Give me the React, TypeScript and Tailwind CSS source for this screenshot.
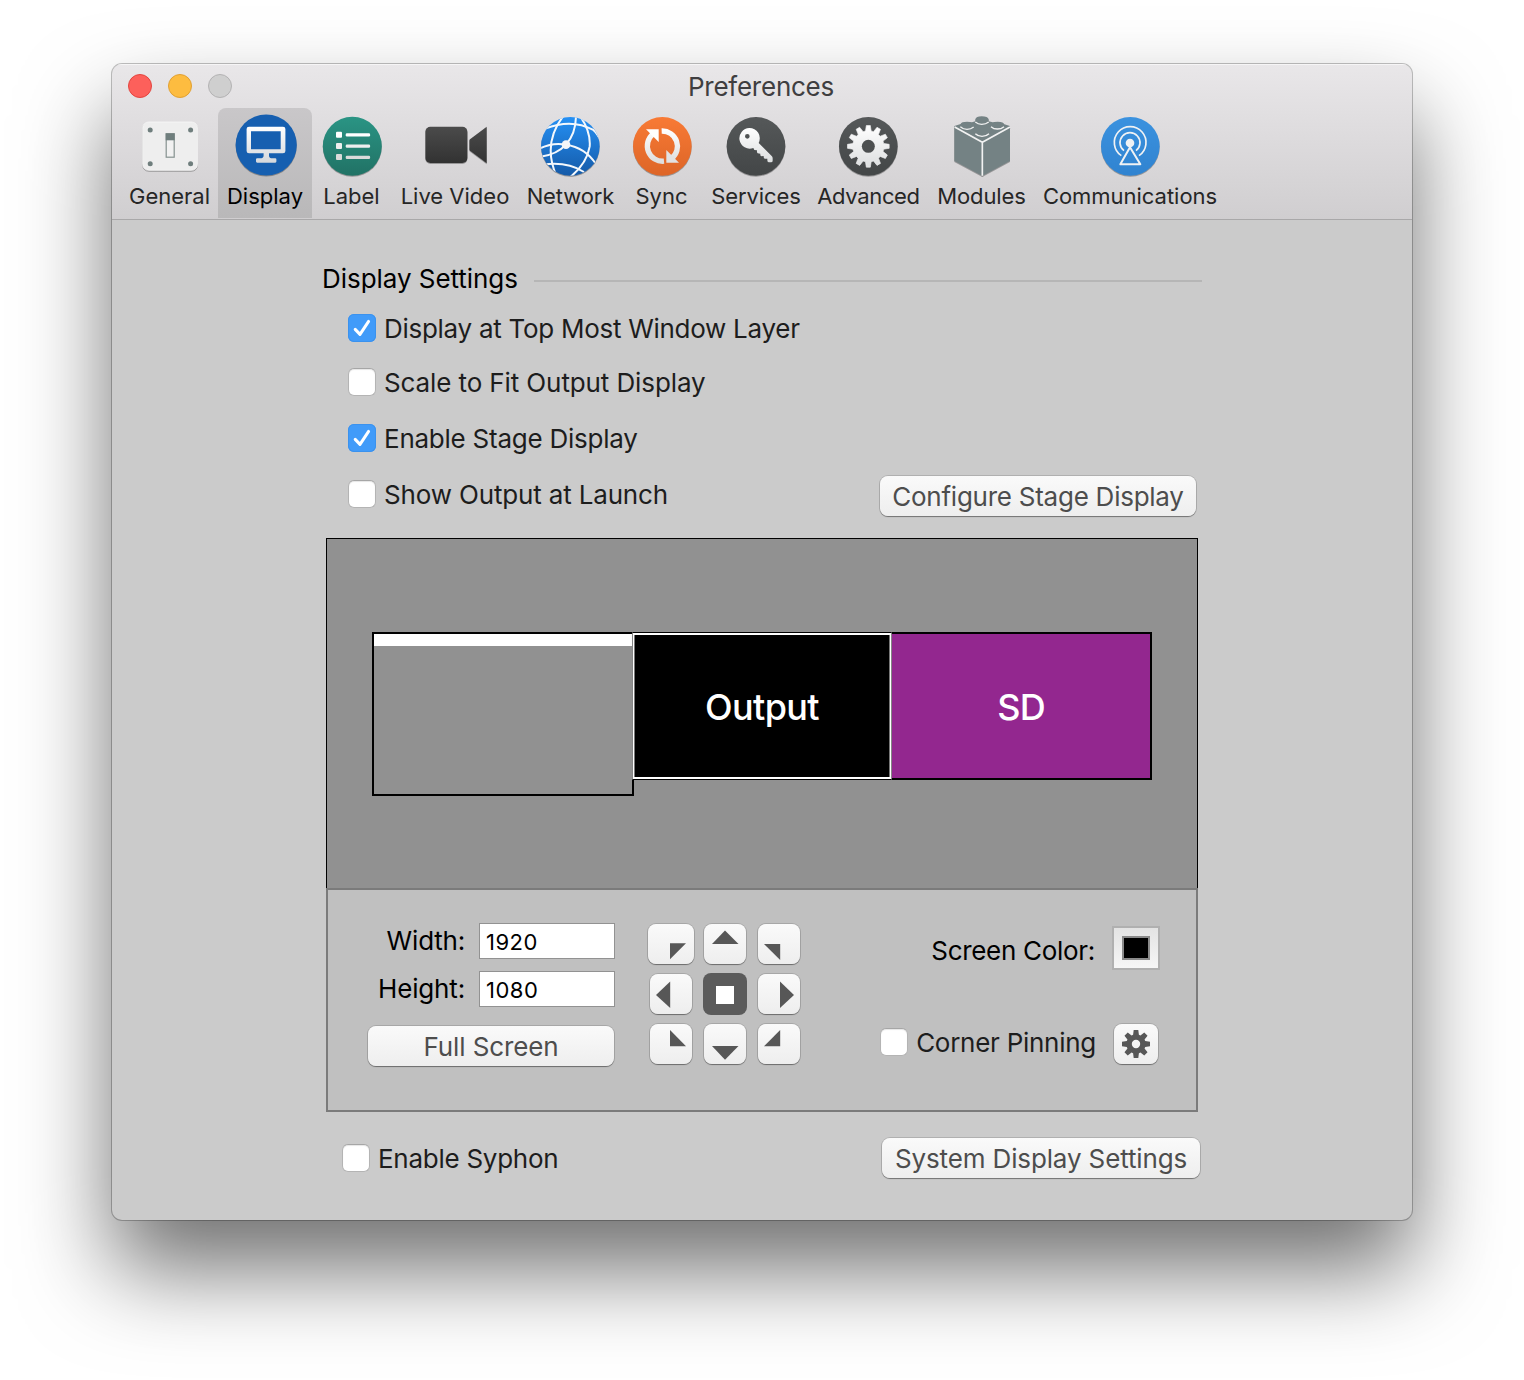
import React from 'react';

function gearPath(cx: number, cy: number, teeth: number, body: number, outer: number, baseHalf: number, tipHalf: number) {
  const pts: string[] = [];
  for (let i = 0; i < teeth; i++) {
    const a = (i / teeth) * Math.PI * 2 - Math.PI / 2;
    const c = Math.cos(a);
    const s = Math.sin(a);
    const at = (r: number, t: number) => `${(cx + r * c - t * s).toFixed(2)} ${(cy + r * s + t * c).toFixed(2)}`;
    pts.push(at(body, -baseHalf), at(outer, -tipHalf), at(outer, tipHalf), at(body, baseHalf));
  }
  return `M${pts.join('L')}Z`;
}

function Grad({ id, from, to }: { id: string; from: string; to: string }) {
  return (
    <linearGradient id={id} x1="0" y1="0" x2="0" y2="1">
      <stop offset="0" stopColor={from} />
      <stop offset="1" stopColor={to} />
    </linearGradient>
  );
}

function Icon({ children }: { children: React.ReactNode }) {
  return (
    <svg width="64" height="64" viewBox="0 0 64 64" className="shrink-0 overflow-visible drop-shadow-[0_1px_0.5px_rgba(0,0,0,0.3)]">
      {children}
    </svg>
  );
}

const GeneralIcon = () => (
  <Icon>
    <rect x="5.7" y="8" width="54.8" height="48.3" rx="6" fill="#eeeeee" stroke="#f8f8f8" strokeWidth="0.8" />
    {[13.2, 53.6].map((x) => [16, 49.7].map((y) => <circle key={`${x}-${y}`} cx={x} cy={y} r="2.5" fill="#6f7e7d" />))}
    <rect x="29.2" y="19.8" width="8" height="23.4" fill="#f1f1f1" stroke="#85918f" strokeWidth="1.2" />
    <rect x="28.7" y="19.3" width="9" height="7" fill="#6f7e7d" />
  </Icon>
);

const DisplayIcon = () => (
  <Icon>
    <defs><Grad id="scr" from="#ffffff" to="#d5d8dc" /></defs>
    <circle cx="33.2" cy="31" r="30.6" fill="#165fb0" />
    <path
      fillRule="evenodd"
      fill="url(#scr)"
      d="M16 12.7h34a2.4 2.4 0 0 1 2.4 2.4v21.8a2.4 2.4 0 0 1-2.4 2.4H36v2.6q.2 2.4 3.4 2.4h2.8q1.2.1 1.2 1.2v2.1q0 1-1.2 1.1H24.2q-1.2 0-1.2-1.1v-2.1q0-1.1 1.2-1.2h2.8q3.4 0 3.6-2.4v-2.6H16a2.4 2.4 0 0 1-2.4-2.4V15.1A2.4 2.4 0 0 1 16 12.7zM18 17.2v18h29.7v-18z"
    />
  </Icon>
);

const LabelIcon = () => (
  <Icon>
    <defs><Grad id="lab" from="#2a9484" to="#217265" /></defs>
    <circle cx="32.3" cy="32.3" r="29.5" fill="url(#lab)" />
    {[
      { fill: '#ffffff', y: 17.7 },
      { fill: '#eeeeee', y: 29 },
      { fill: '#dadada', y: 40.1 },
    ].map(({ fill, y }) => (
      <g key={y} fill={fill}>
        <rect x="16" y={y} width="6" height="6" rx="1" />
        <rect x="25.7" y={y + 1.6} width="24.4" height="3.2" rx="1.2" />
      </g>
    ))}
  </Icon>
);

const VideoIcon = () => (
  <Icon>
    <defs><Grad id="vid" from="#4b4b4b" to="#323232" /></defs>
    <rect x="2.4" y="12.7" width="42" height="36.3" rx="5" fill="url(#vid)" />
    <path d="M46.4 26.5q0-.7.6-1.2L63.7 12.7v36.6L47 36.7q-.6-.5-.6-1.2z" fill="url(#vid)" />
  </Icon>
);

const NetworkIcon = () => (
  <Icon>
    <defs>
      <Grad id="net" from="#2590f4" to="#155aa8" />
      <clipPath id="netclip"><circle cx="541" cy="139" r="88" /></clipPath>
    </defs>
    <g transform="translate(-148 -14) scale(0.33333)">
      <circle cx="541" cy="139" r="88" fill="url(#net)" />
      <g clipPath="url(#netclip)" fill="none" stroke="#f4f8fc" strokeWidth="6">
        <path d="M520 48Q456 130 500 230" />
        <path d="M528 134Q558 100 558 46" />
        <path d="M570 48Q603 95 599 140Q590 192 540 232" />
        <path d="M466 86Q545 54 610 90Q622 100 634 126" />
        <path d="M448 146Q488 126 528 134Q585 142 618 192" />
        <path d="M528 134Q500 164 452 170" />
        <path d="M460 194Q530 184 582 216" />
      </g>
      <circle cx="528" cy="134" r="13" fill="#f4f6f8" />
    </g>
  </Icon>
);

const SyncIcon = () => (
  <Icon>
    <defs>
      <Grad id="syn" from="#f87a35" to="#dd6527" />
      <linearGradient id="arr" gradientUnits="userSpaceOnUse" x1="0" y1="86" x2="0" y2="190">
        <stop offset="0" stopColor="#ffffff" />
        <stop offset="1" stopColor="#dddddd" />
      </linearGradient>
    </defs>
    <g transform="translate(-240 -14) scale(0.33333)">
      <circle cx="817" cy="139" r="88" fill="url(#syn)" />
      <g fill="none" stroke="url(#arr)" strokeWidth="16">
        <path d="M822 183.5A46 46 0 0 1 789 102" />
        <path d="M815 93A46 46 0 0 1 845 175" />
      </g>
      <path d="M768 88H806V126Z" fill="#ffffff" />
      <path d="M867 188H829V150Z" fill="#e2e2e2" />
    </g>
  </Icon>
);

const ServicesIcon = () => (
  <Icon>
    <defs>
      <Grad id="dark" from="#555859" to="#434647" />
      <Grad id="pale" from="#ffffff" to="#dcdedf" />
    </defs>
    <g transform="translate(-24 -14) scale(0.33333)">
      <circle cx="168" cy="139" r="88" fill="url(#dark)" />
      <path
        fillRule="evenodd"
        fill="url(#pale)"
        d="M148 84A31 31 0 0 1 176 129L215 168Q218 171 218 175V182Q218 187 213 187H206Q202 187 202 181V176H195Q191 176 191 171V168L184 169Q180 168 181 161L173 160Q170 156 171 151L163 150L160 144A31 31 0 1 1 148 84ZM142 102A7 7 0 1 0 142 116A7 7 0 1 0 142 102Z"
      />
    </g>
  </Icon>
);

const AdvancedIcon = () => (
  <Icon>
    <g transform="translate(-136 -14) scale(0.33333)">
      <circle cx="505" cy="139" r="88" fill="url(#dark)" />
      <path d={gearPath(505, 139, 12, 46, 62.5, 8.5, 6)} fill="url(#pale)" stroke="#eeeff0" strokeWidth="2" strokeLinejoin="round" />
      <circle cx="505" cy="139" r="19.5" fill="#4c4f50" />
    </g>
  </Icon>
);

const ModulesIcon = () => (
  <Icon>
    <g transform="translate(-19 -58) scale(0.33333)">
      <path
        fill="#748284"
        d="M73 210L92 204Q94 197 111 197Q122 197 126 199L136 196V190Q138 181 155 181Q174 181 176 190V196L188 199Q192 197 203 197Q222 198 223 205L240 210V315L157 360L73 315Z"
      />
      <g fill="none" stroke="#f2f2f2" strokeWidth="5">
        <path d="M74 213L157 259L240 213M157 259V359" />
        <path d="M91 212Q100 220 111 220Q123 220 131 213" strokeWidth="4" />
        <path d="M136 198Q144 205 155 205Q168 205 176 198" strokeWidth="4" />
        <path d="M183 212Q191 219 202 219Q214 219 222 212" strokeWidth="4" />
        <path d="M136 233Q144 241 156 241Q169 241 177 233" strokeWidth="4" />
      </g>
    </g>
  </Icon>
);

const CommunicationsIcon = () => (
  <Icon>
    <defs><Grad id="com" from="#3b92df" to="#3083d0" /></defs>
    <g transform="translate(-168 -58) scale(0.33333)">
      <circle cx="601" cy="271" r="88" fill="url(#com)" />
      <g fill="none" stroke="#f0f2f4" strokeWidth="5">
        <path d="M574 299A47.5 47.5 0 1 1 627 299" />
        <path d="M582 284A30 30 0 1 1 618 284" />
        <path d="M600 274L571 325H631Z" strokeLinejoin="round" strokeWidth="6" />
      </g>
      <circle cx="600" cy="261" r="13" fill="#f0f2f4" />
    </g>
  </Icon>
);

const tabs = [
  { label: 'General', width: 'w-[98px]', icon: <GeneralIcon />, text: 'ml-px' },
  { label: 'Display', width: 'w-[94px]', icon: <DisplayIcon />, text: '', selected: true },
  { label: 'Label', width: 'w-20', icon: <LabelIcon />, text: 'mr-px' },
  { label: 'Live Video', width: 'w-[126px]', icon: <VideoIcon />, text: '' },
  { label: 'Network', width: 'w-[104px]', icon: <NetworkIcon />, text: 'ml-px tracking-[-0.1px]' },
  { label: 'Sync', width: 'w-20', icon: <SyncIcon />, text: 'mr-px' },
  { label: 'Services', width: 'w-[107px]', icon: <ServicesIcon />, text: 'ml-px tracking-[-0.08px]' },
  { label: 'Advanced', width: 'w-[118px]', icon: <AdvancedIcon />, text: 'ml-px tracking-[-0.35px]' },
  { label: 'Modules', width: 'w-[108px]', icon: <ModulesIcon />, text: 'ml-px tracking-[-0.1px]' },
  { label: 'Communications', width: 'w-[190px]', icon: <CommunicationsIcon />, text: 'tracking-[-0.03px]' },
];

function Checkbox({ label, checked, text = '' }: { label: string; checked?: boolean; text?: string }) {
  return (
    <label className="flex h-7 items-center gap-2">
      {checked ? (
        <span className="flex size-7 items-center justify-center rounded-md bg-[#419bf9] shadow-[inset_0_0_0_1px_#3b92ee]">
          <svg width="28" height="28" viewBox="0 0 28 28" fill="none" stroke="#ffffff" strokeWidth="3" strokeLinecap="round" strokeLinejoin="round">
            <path d="M7.2 15.4L12 20.4L20.6 7.4" />
          </svg>
        </span>
      ) : (
        <span className="size-7 rounded-md border border-[#b4b4b4] border-t-[#a6a6a6] bg-white shadow-[inset_0_1px_1px_#e6e6e6]" />
      )}
      <span className={`whitespace-nowrap pt-0.5 ${text}`}>{label}</span>
    </label>
  );
}

const face = 'rounded-lg bg-linear-to-b from-[#fafafa] to-[#eeeeee] shadow-[0_0_0_1px_rgba(0,0,0,0.13),0_1px_1px_rgba(0,0,0,0.35)]';

function Button({ label, className }: { label: string; className: string }) {
  return <button className={`flex h-10 items-center justify-center whitespace-nowrap pt-0.5 text-[#4d4d4d] ${face} ${className}`}>{label}</button>;
}

const anchors = [
  { d: 'M22 19.3H38L22 35.3Z', box: 'w-[46px] -ml-0.5', w: 46 },
  { d: 'M21 6.5L34.5 20H8Z', box: 'w-[42px]', w: 42 },
  { d: 'M6 20H22.2V36Z', box: 'w-[42px]', w: 42 },
  { d: 'M20.2 7.5V34L6 21Z', box: 'w-[42px]', w: 42 },
  null,
  { d: 'M22 7.5V34L36 21Z', box: 'w-[42px]', w: 42 },
  { d: 'M20 6L36 22.2H20Z', box: 'w-[42px]', w: 42 },
  { d: 'M8 22H34.5L21 35.8Z', box: 'w-[42px]', w: 42 },
  { d: 'M22.2 6V22.2H6Z', box: 'w-[42px]', w: 42 },
];

function SizeField({ label, value, text, className = '' }: { label: string; value: string; text: string; className?: string }) {
  return (
    <div className={`flex h-9 items-center justify-end gap-3.5 ${className}`}>
      <span className={text}>{label}</span>
      <span className="flex h-9 w-[136px] items-center border border-[#929292] bg-white pt-px pl-1.5 text-[22px] tracking-[0.5px]">{value}</span>
    </div>
  );
}

export default function App() {
  return (
    <div className="h-[1380px] w-[1524px] overflow-hidden bg-white pt-16 pl-28 font-['Inter',sans-serif] text-[26px] leading-8 text-[#1d1d1d]">
      <div className="flex h-[1156px] w-[1300px] flex-col overflow-hidden rounded-[10px] bg-[#cbcbcb] shadow-[0_0_0_1px_rgba(0,0,0,0.24),0_50px_90px_rgba(0,0,0,0.56)]">
        <header className="h-[156px] shrink-0 border-b border-[#a9a8a9] bg-linear-to-b from-[#e9e7e9] to-[#d0ced0] shadow-[inset_0_1px_0_#f6f5f6]">
          <div className="flex h-11 items-center justify-between px-4">
            <div className="flex w-[104px] gap-4">
              <i className="size-6 rounded-full border border-[#e2453f] bg-[#fd605b]" />
              <i className="size-6 rounded-full border border-[#e0a033] bg-[#fdbc40]" />
              <i className="size-6 rounded-full border border-[#b3b2b3] bg-[#cfcfcf]" />
            </div>
            <h1 className="pt-0.5 pr-0.5 tracking-[-0.25px] text-[#3f3e40]">Preferences</h1>
            <div className="w-[104px]" />
          </div>
          <nav className="flex pl-2 text-[22px] leading-7">
            {tabs.map((t) => (
              <div key={t.label} className={`flex h-[110px] flex-col items-center rounded-t-lg pt-1.5 ${t.width} ${t.selected ? 'bg-linear-to-b from-[#c9c7c9] to-[#b9b8b9] text-black' : 'text-[#262626]'}`}>
                {t.icon}
                <span className={`mt-1 whitespace-nowrap ${t.text}`}>{t.label}</span>
              </div>
            ))}
          </nav>
        </header>

        <main className="ml-[210px] w-[880px] pt-[43px]">
          <div className="flex h-8 items-center">
            <h2 className="w-[212px] whitespace-nowrap tracking-[-0.05px] text-black">Display Settings</h2>
            <div className="mt-1 h-0.5 flex-1 bg-[#b6b6b6]" />
          </div>

          <div className="mt-[19px] flex h-[202px] items-end justify-between pr-1.5 pl-[26px]">
            <div className="flex h-full flex-col">
              <Checkbox label="Display at Top Most Window Layer" checked text="tracking-[-0.28px]" />
              <div className="mt-[26px]"><Checkbox label="Scale to Fit Output Display" text="tracking-[-0.11px]" /></div>
              <div className="mt-7"><Checkbox label="Enable Stage Display" checked text="tracking-[-0.24px]" /></div>
              <div className="mt-7"><Checkbox label="Show Output at Launch" text="tracking-[-0.16px]" /></div>
            </div>
            <Button label="Configure Stage Display" className="w-[316px] tracking-[-0.25px]" />
          </div>

          <section className="mt-[22px] ml-1 w-[872px]">
            <div className="flex h-[350px] items-start border border-b-0 border-black bg-[#919191] pt-[93px] pl-[45px] text-4xl font-[450] text-white">
              <div className="-mr-0.5 h-[164px] w-[262px] border-2 border-black">
                <div className="h-3 bg-white" />
              </div>
              <div className="z-10 h-[148px] w-[260px] border border-x-[#868686] border-y-black bg-black">
                <div className="h-full border-x border-y-2 border-white">
                  <div className="flex h-full items-center justify-center border-x border-[#777777] pt-0.5 tracking-[-0.6px]">Output</div>
                </div>
              </div>
              <div className="flex h-[148px] w-[260px] items-center justify-center border-2 border-l-0 border-black bg-[#93278f] pt-0.5 tracking-[-0.8px]">SD</div>
            </div>

            <div className="flex h-[224px] border-2 border-[#7b7b7b] bg-[#c0c0c0] text-black">
              <div className="ml-10 w-[247px] pt-[33px]">
                <SizeField label="Width:" value="1920" text="tracking-[-0.2px]" />
                <SizeField label="Height:" value="1080" text="tracking-[-0.15px]" className="mt-3" />
                <Button label="Full Screen" className="mt-[19px] w-[246px] tracking-[-0.1px]" />
              </div>

              <div className="mt-[34px] ml-[35px] grid h-[140px] w-[150px] grid-cols-[42px_42px_42px] gap-x-3 gap-y-2.5">
                {anchors.map((a, i) =>
                  a ? (
                    <button key={i} className={`h-10 ${a.box} ${face}`}>
                      <svg width={a.w} height="40" viewBox={`0 0 ${a.w} 40`} fill="#575757"><path d={a.d} /></svg>
                    </button>
                  ) : (
                    <button key={i} className="-m-px flex items-center justify-center rounded-lg bg-[#5b5b5b] pt-0.5">
                      <span className="size-[18px] bg-white" />
                    </button>
                  ),
                )}
              </div>

              <div className="mt-9 ml-20 w-[280px]">
                <div className="flex items-center justify-end">
                  <span className="mt-1.5 mr-[17px] tracking-[-0.3px]">Screen Color:</span>
                  <div className="h-11 w-12 border-2 border-[#b0b0b0] bg-linear-to-b from-[#e3e3e3] to-[#f6f6f6] pt-2 pl-2">
                    <div className="h-6 w-7 border-2 border-[#8a8a8a] bg-black" />
                  </div>
                </div>
                <div className="mt-[54px] flex items-start justify-end pr-0.5 text-[#1d1d1d]">
                  <div className="mt-1 mr-[18px]"><Checkbox label="Corner Pinning" text="tracking-[-0.27px]" /></div>
                  <button className={`flex h-10 w-11 items-center justify-center ${face}`}>
                    <svg width="30" height="30" viewBox="-15 -15 30 30">
                      <path fillRule="evenodd" fill="#575757" d={`${gearPath(0, 0, 8, 9.2, 14, 2.9, 2.3)}M0 -4.2A4.2 4.2 0 1 0 0 4.2A4.2 4.2 0 1 0 0 -4.2Z`} />
                    </svg>
                  </button>
                </div>
              </div>
            </div>
          </section>

          <div className="mt-[26px] flex h-10 items-center justify-between pr-0.5 pl-5">
            <Checkbox label="Enable Syphon" text="tracking-[-0.27px]" />
            <Button label="System Display Settings" className="w-[318px] tracking-[-0.13px]" />
          </div>
        </main>
      </div>
    </div>
  );
}
